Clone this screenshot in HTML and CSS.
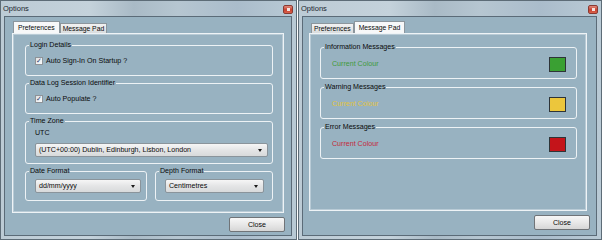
FILE: index.html
```html
<!DOCTYPE html>
<html lang="en">
<head>
    <meta charset="UTF-8">
    <meta name="viewport" content="width=device-width, initial-scale=1.0">
    <title>Options</title>
    <link rel="stylesheet" href="styles.css">
</head>
<body>
    <div class="desktop">
        <div class="window win-left">
            <div class="titlebar">
                <span class="title">Options</span>
                <span class="close-x"><span></span></span>
            </div>
            <div class="client">
                <div class="tabs">
                    <div class="tab active">Preferences</div>
                    <div class="tab">Message Pad</div>
                </div>
                <div class="tab-page page-prefs">
                    <div class="group g-check">
                        <span class="legend">Login Details</span>
                        <label class="check"><span class="box">&#10003;</span>Auto Sign-In On Startup ?</label>
                    </div>
                    <div class="group g-check">
                        <span class="legend">Data Log Session Identifier</span>
                        <label class="check"><span class="box">&#10003;</span>Auto Populate ?</label>
                    </div>
                    <div class="group g-zone">
                        <span class="legend">Time Zone</span>
                        <div class="zone-label">UTC</div>
                        <div class="combo">(UTC+00:00) Dublin, Edinburgh, Lisbon, London<span class="arrow"></span></div>
                    </div>
                    <div class="group-row">
                        <div class="group g-date">
                            <span class="legend">Date Format</span>
                            <div class="combo">dd/mm/yyyy<span class="arrow"></span></div>
                        </div>
                        <div class="group g-depth">
                            <span class="legend">Depth Format</span>
                            <div class="combo">Centimetres<span class="arrow"></span></div>
                        </div>
                    </div>
                </div>
                <div class="footer">
                    <button class="btn">Close</button>
                </div>
            </div>
        </div>

        <div class="window win-right">
            <div class="titlebar">
                <span class="title">Options</span>
                <span class="close-x"><span></span></span>
            </div>
            <div class="client">
                <div class="tabs">
                    <div class="tab">Preferences</div>
                    <div class="tab active">Message Pad</div>
                </div>
                <div class="tab-page page-msgs">
                    <div class="group g-colour">
                        <span class="legend">Information Messages</span>
                        <span class="colour-label info">Current Colour</span>
                        <span class="swatch info"></span>
                    </div>
                    <div class="group g-colour">
                        <span class="legend">Warning Messages</span>
                        <span class="colour-label warn">Current Colour</span>
                        <span class="swatch warn"></span>
                    </div>
                    <div class="group g-colour">
                        <span class="legend">Error Messages</span>
                        <span class="colour-label error">Current Colour</span>
                        <span class="swatch error"></span>
                    </div>
                </div>
                <div class="footer">
                    <button class="btn">Close</button>
                </div>
            </div>
        </div>
    </div>
</body>
</html>
```

FILE: styles.css
```css
body {
    margin: 0;
    background-color: #ffffff;
    font-family: "Liberation Sans", Arial, sans-serif;
    font-size: 7.1px;
    color: #0a0a0a;
}

.desktop {
    display: flex;
    gap: 1px;
    background-color: #ffffff;
}

.window {
    height: 240px;
    box-sizing: border-box;
    border: 1px solid #5d6c77;
    background: linear-gradient(90deg, #bccbd5 0%, #c4d2db 30%, #a9bac6 45%, #b6c6d1 60%, #aabccb 80%, #b9cad5 100%);
    display: flex;
    flex-direction: column;
}

.win-left {
    width: 297px;
}

.win-right {
    width: 304px;
}

.titlebar {
    height: 15px;
    display: flex;
    align-items: center;
    justify-content: space-between;
    padding: 0 3px 0 2px;
}

.title {
    font-size: 7.5px;
    color: #1a2630;
}

.close-x {
    width: 10px;
    height: 9px;
    margin-top: 2px;
    border: 1px solid #8a3a32;
    border-radius: 2px;
    box-sizing: border-box;
    background: linear-gradient(#e08a7c, #c8412f 55%, #d9624c);
    display: flex;
    align-items: center;
    justify-content: center;
}

.close-x span {
    width: 3px;
    height: 3px;
    background-color: #f4e4e0;
}

.client {
    flex: 1;
    margin: 0 4px 3px 3px;
    border: 1px solid #5b6b78;
    background-color: #98b2c1;
    padding: 4px 0 0 7px;
    display: flex;
    flex-direction: column;
}

.tabs {
    display: flex;
    align-items: flex-end;
    height: 12px;
    padding-left: 1px;
}

.tab {
    height: 10px;
    line-height: 10px;
    padding: 0 2px;
    border: 1px solid #8c969d;
    border-bottom: none;
    background: linear-gradient(#f2f2f2, #d9dcde);
    box-sizing: border-box;
    font-size: 6.8px;
}

.tab.active {
    height: 12px;
    line-height: 12px;
    padding: 0 4px;
    background: #f7f8f9;
    border-color: #8c969d;
}

.tab-page {
    border: 1px solid #eef3f6;
    box-shadow: inset 0 0 0 1px #b9cbd6;
    box-sizing: border-box;
    display: flex;
    flex-direction: column;
}

.page-prefs {
    width: 272px;
    padding: 11px 10px 11px 12px;
    gap: 7px;
}

.page-msgs {
    width: 278px;
    margin-left: -1px;
    height: 178px;
    padding: 13px 9px 0 10px;
    gap: 8px;
}

.group {
    position: relative;
    border: 1px solid #edf2f5;
    border-radius: 3px;
    box-sizing: border-box;
}

.legend {
    position: absolute;
    top: -6px;
    left: 3px;
    padding: 0 1px;
    background-color: #98b2c1;
    line-height: 10px;
    color: #0a0a0a;
}

.g-check {
    height: 31px;
    display: flex;
    align-items: center;
    padding-left: 9px;
}

.check {
    display: flex;
    align-items: center;
    gap: 3px;
}

.box {
    width: 8px;
    height: 8px;
    box-sizing: border-box;
    border: 1px solid #8e9398;
    background: linear-gradient(135deg, #dfe2e4, #fbfbfb);
    font-size: 7px;
    line-height: 6px;
    text-align: center;
    color: #2a3c72;
}

.g-zone {
    height: 43px;
    padding: 6px 4px 0 9px;
}

.zone-label {
    line-height: 11px;
    margin-bottom: 4px;
}

.combo {
    position: relative;
    height: 14px;
    line-height: 12px;
    box-sizing: border-box;
    border: 1px solid #8a949b;
    border-radius: 2px;
    background: linear-gradient(#f6f6f6, #e4e5e6 50%, #d8dadb);
    padding-left: 3px;
}

.arrow {
    position: absolute;
    right: 5px;
    top: 5px;
    border-left: 2.5px solid transparent;
    border-right: 2.5px solid transparent;
    border-top: 3px solid #1a1a1a;
}

.group-row {
    display: flex;
    gap: 8px;
}

.g-date,
.g-depth {
    height: 30px;
    display: flex;
    align-items: center;
}

.g-date {
    width: 122px;
    padding: 0 5px 0 9px;
}

.g-depth {
    flex: 1;
    padding: 0 8px 0 9px;
}

.g-date .combo,
.g-depth .combo {
    flex: 1;
}

.g-colour {
    height: 32px;
    display: flex;
    align-items: center;
    justify-content: space-between;
    padding: 2px 10px 0 11px;
}

.colour-label.info {
    color: #3f9a3a;
}

.colour-label.warn {
    color: #e3c43c;
}

.colour-label.error {
    color: #c4283a;
}

.swatch {
    width: 17px;
    height: 15px;
    box-sizing: border-box;
    border: 1px solid #2e3438;
}

.swatch.info {
    background-color: #3aa033;
}

.swatch.warn {
    background-color: #ecc63c;
}

.swatch.error {
    background-color: #c4141a;
}

.footer {
    display: flex;
    justify-content: flex-end;
    padding: 4px 6px 0 0;
}

.btn {
    width: 56px;
    height: 15px;
    padding: 0;
    border: 1px solid #707478;
    border-radius: 2px;
    background: linear-gradient(#f7f7f7, #e8e8e8 50%, #d6d6d6);
    font-family: "Liberation Sans", Arial, sans-serif;
    font-size: 7.1px;
    color: #0a0a0a;
}
```
